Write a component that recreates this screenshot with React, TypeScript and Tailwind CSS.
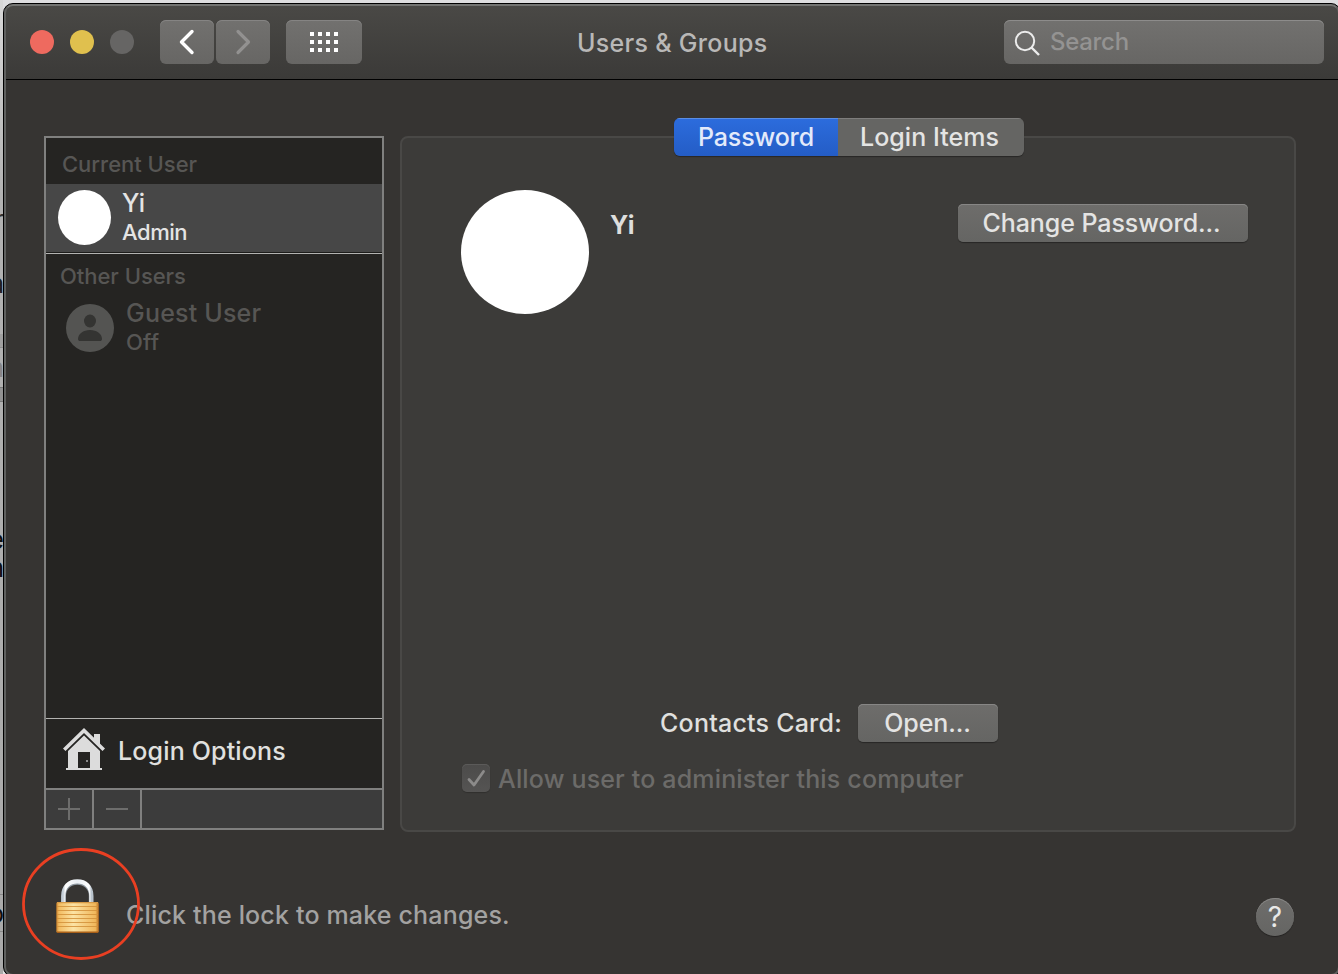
import React from "react";

const backdropText = [
  { ch: "r", cls: "top-[203px] text-[#303030]" },
  { ch: "a", cls: "top-[267px] text-[#202020]" },
  { ch: "n", cls: "top-[351px] text-[#858585]" },
  { ch: "e", cls: "top-[523px] text-[#101010]" },
  { ch: "n", cls: "top-[551px] text-[#101010]" },
  { ch: "o", cls: "top-[897px] text-[#101010]" },
];

function Backdrop() {
  return (
    <div className="relative h-full w-[3px] shrink-0 overflow-hidden bg-gradient-to-b from-[#d8d8d8] via-[#b2b2b2] via-20% to-[#a9a9a9]">
      <div className="absolute top-[334px] h-[14px] w-full border-b border-[#8d8d8d] bg-[#a0a0a0]" />
      <div className="absolute top-[387px] h-[15px] w-full border-y border-[#777] bg-[#929292]" />
      <div className="absolute top-[894px] h-[38px] w-full border-y border-[#888]" />
      {backdropText.map((t, i) => (
        <span key={i} className={"absolute right-[-1px] text-[26px] leading-[34px] " + t.cls}>
          {t.ch}
        </span>
      ))}
    </div>
  );
}

const raised =
  "bg-gradient-to-b from-[#6e6d6b] to-[#656563] shadow-[inset_0_1px_0_#878685,0_1px_1px_rgba(0,0,0,0.35)]";

function TitleBar() {
  return (
    <header className="flex h-[76px] shrink-0 items-start border-b border-black bg-gradient-to-b from-[#4a4946] to-[#3b3a38] pl-[26px] pt-4">
      <div className="mt-[10px] flex gap-4">
        <span className="size-6 rounded-full bg-[#ee6a5f]" />
        <span className="size-6 rounded-full bg-[#e0c04e]" />
        <span className="size-6 rounded-full bg-[#666564]" />
      </div>
      <div className="ml-[26px] flex gap-[2px]">
        <button className="flex h-11 w-[54px] items-center justify-center rounded-md bg-gradient-to-b from-[#72716f] to-[#676664] shadow-[inset_0_1px_0_#858483]">
          <svg width="16" height="26" viewBox="0 0 16 26" fill="none" stroke="#fff" strokeWidth="3.4" strokeLinecap="round" strokeLinejoin="round">
            <path d="M13 2.500 2.500 13 13 23.500" />
          </svg>
        </button>
        <button className="flex h-11 w-[54px] items-center justify-center rounded-md bg-gradient-to-b from-[#72716f] to-[#676664] shadow-[inset_0_1px_0_#858483]">
          <svg width="16" height="26" viewBox="0 0 16 26" fill="none" stroke="#929190" strokeWidth="3.200" strokeLinecap="round" strokeLinejoin="round">
            <path d="M3 2.500 13.500 13 3 23.500" />
          </svg>
        </button>
      </div>
      <button className="ml-4 flex h-11 w-[76px] items-center justify-center rounded-md bg-gradient-to-b from-[#72716f] to-[#676664] shadow-[inset_0_1px_0_#858483]">
        <span className="grid grid-cols-4 gap-1">
          {Array.from({ length: 12 }, (_, i) => (
            <span key={i} className="size-1 bg-white" />
          ))}
        </span>
      </button>
      <h1 className="ml-[215px] mt-[7px] w-[200px] whitespace-nowrap text-[25px] font-[450] leading-8 tracking-[0.3px] text-[#b9b8b7]">
        Users &amp; Groups
      </h1>
      <div className="ml-[227px] flex h-11 w-[320px] shrink-0 items-start rounded-md bg-gradient-to-b from-[#72716f] to-[#676664] pl-[10px] shadow-[inset_0_1px_0_#8d8c8b]">
        <svg className="mt-[10px]" width="27" height="27" viewBox="0 0 27 27" fill="none" stroke="#ececec" strokeWidth="2">
          <circle cx="11" cy="11" r="9.2" />
          <path d="M17.5 17.5 25 25" strokeWidth="2.4" />
        </svg>
        <span className="ml-[9px] mt-[6px] text-[24px] font-[450] leading-8 tracking-[-0.3px] text-[#949392]">Search</span>
      </div>
    </header>
  );
}

function HouseIcon() {
  return (
    <svg width="42" height="43" viewBox="0 0 42 43" fill="#dcdcdc">
      <path d="M31 6h6v13l-6-6z" />
      <path d="M21 0 42 20.500 39.500 23 21 5 2.500 23 0 20.500z" />
      <path d="M21 7.500 37 23v17h2v2H3v-2h2V23z" />
      <path fill="#252422" d="M15 24h12v16H15z" />
      <path fill="#8b8b8b" d="M23 32h2v2h-2z" />
    </svg>
  );
}

function Sidebar() {
  return (
    <aside className="flex h-[694px] w-[340px] shrink-0 flex-col border-2 border-[#80807f] bg-[#252422]">
      <div className="h-[46px] pl-4 pt-3 text-[22px] font-[450] leading-7 tracking-[-0.02px] text-[#575654]">Current User</div>
      <div className="flex h-[68px] items-start bg-[#474747] pl-3 text-[#e4e4e4]">
        <span className="mt-[6px] h-[55px] w-[53px] rounded-[50%] bg-white" />
        <div className="ml-[11px] mt-1">
          <div className="text-[25px] font-[450] leading-[30px]">Yi</div>
          <div className="text-[22px] font-[450] leading-7 tracking-[-0.45px]">Admin</div>
        </div>
      </div>
      <div className="h-[2px] border-b border-[#b3b3b1] bg-[#1c1c1a]" />
      <div className="pl-[14px] pt-2 text-[22px] font-[450] leading-7 tracking-[-0.04px] text-[#575654]">Other Users</div>
      <div className="mt-2 flex items-start pl-5 text-[#575654]">
        <svg className="mt-[6px]" width="48" height="48" viewBox="0 0 48 48">
          <circle cx="24" cy="24" r="24" fill="#545452" />
          <ellipse cx="24" cy="17" rx="6" ry="6.5" fill="#343432" />
          <path d="M12 35c0-5 5-9 12-9s12 4 12 9c0 1.500-1 2-2 2H14c-1 0-2-.5-2-2z" fill="#343432" />
        </svg>
        <div className="ml-3">
          <div className="text-[25px] font-[450] leading-[30px] tracking-[0.2px]">Guest User</div>
          <div className="text-[22px] font-[450] leading-7 tracking-[0.2px]">Off</div>
        </div>
      </div>
      <div className="mt-auto flex h-[70px] items-start border-t border-[#b3b3b1] pl-[17px]">
        <div className="mt-[9px]">
          <HouseIcon />
        </div>
        <span className="ml-[13px] mt-4 whitespace-nowrap text-[25px] font-[450] leading-8 tracking-[0.16px] text-[#e0e0df]">Login Options</span>
      </div>
      <div className="flex h-10 border-t-2 border-[#80807f] bg-[#3c3c3c]">
        <span className="flex w-12 items-center justify-center border-r-2 border-[#80807f]">
          <svg width="22" height="22" viewBox="0 0 22 22" stroke="#6d6d6c" strokeWidth="2">
            <path d="M0 11h22M11 0v22" />
          </svg>
        </span>
        <span className="flex w-12 items-center justify-center border-r-2 border-[#80807f]">
          <svg width="22" height="22" viewBox="0 0 22 22" stroke="#6d6d6c" strokeWidth="2">
            <path d="M0 11h22" />
          </svg>
        </span>
      </div>
    </aside>
  );
}

function PasswordPanel() {
  return (
    <section className="ml-4 h-[696px] w-[896px] shrink-0 rounded-lg border-2 border-[#494846] bg-[#3c3b39]">
      <div className="-mt-5 ml-[272px] flex h-[38px] w-[350px] overflow-hidden rounded-[6px] text-[25px] font-[450] leading-[38px] shadow-[0_1px_1px_rgba(0,0,0,0.35)]">
        <button className="w-[164px] bg-gradient-to-b from-[#2c6cdd] to-[#245dc6] tracking-[-0.15px] text-[#e3eafa] shadow-[inset_0_1px_0_#5a8de4]">Password</button>
        <button className="w-[186px] bg-[#656563] pr-[3px] tracking-[0.05px] text-[#e4e4e3] shadow-[inset_0_1px_0_#7e7d7c]">Login Items</button>
      </div>
      <div className="mt-[34px] flex items-start pl-[59px]">
        <span className="h-[124px] w-[128px] rounded-[50%] bg-white" />
        <span className="ml-[21px] mt-[19px] w-[348px] text-[25px] font-bold leading-8 text-[#dededd]">Yi</span>
        <button className={"mt-[14px] h-[38px] w-[290px] whitespace-nowrap rounded-[5px] pr-[3px] text-[25px] font-[450] leading-[38px] tracking-[-0.06px] text-[#e4e4e3] " + raised}>
          Change Password...
        </button>
      </div>
      <div className="mt-[390px] flex items-center pl-[258px]">
        <span className="w-[198px] whitespace-nowrap text-[25px] font-[450] leading-[38px] tracking-[0.22px] text-[#e0e0df]">Contacts Card:</span>
        <button className={"h-[38px] w-[140px] rounded-[5px] pr-[1px] text-[25px] font-[450] leading-[38px] tracking-[-0.08px] text-[#e4e4e3] " + raised}>Open...</button>
      </div>
      <div className="mt-[22px] flex items-start pl-[60px]">
        <span className="flex size-7 items-center justify-center rounded-[5px] bg-gradient-to-b from-[#4c4b4a] to-[#555453] shadow-[inset_0_1px_0_#5b5a59,0_1px_1px_rgba(0,0,0,0.2)]">
          <svg width="20" height="20" viewBox="0 0 20 20" fill="none" stroke="#8c8b8a" strokeWidth="2.800" strokeLinecap="round" strokeLinejoin="round">
            <path d="M3 11.500 8 17 17.500 3.500" />
          </svg>
        </span>
        <span className="ml-2 whitespace-nowrap text-[25px] font-[450] leading-[30px] tracking-[0.17px] text-[#6c6b69]">Allow user to administer this computer</span>
      </div>
    </section>
  );
}

function LockIcon() {
  return (
    <svg width="118" height="112" viewBox="0 0 118 112">
      <defs>
        <linearGradient id="brass" x1="0" x2="1" y1="0" y2="0">
          <stop offset="0" stopColor="#c9802b" />
          <stop offset=".06" stopColor="#f3bd62" />
          <stop offset=".4" stopColor="#fce3a4" />
          <stop offset=".92" stopColor="#f0b75b" />
          <stop offset="1" stopColor="#b96d20" />
        </linearGradient>
        <linearGradient id="steel" x1="0" x2="1" y1="0" y2="0">
          <stop offset="0" stopColor="#c3cdd6" />
          <stop offset=".08" stopColor="#ffffff" />
          <stop offset=".5" stopColor="#e9eef3" />
          <stop offset=".92" stopColor="#ffffff" />
          <stop offset="1" stopColor="#b9c3cc" />
        </linearGradient>
      </defs>
      <path d="M42.500 54V48C42.500 40 48 35.300 55.300 35.300S68.300 40 68.300 48V54" fill="none" stroke="#8d979f" strokeWidth="3" />
      <path d="M41.200 54V48C41.200 38.800 47 33.400 55.300 33.400S69.400 38.800 69.400 48V54" fill="none" stroke="url(#steel)" strokeWidth="4.200" />
      <rect x="34.300" y="54" width="42.500" height="31" rx="1.800" fill="url(#brass)" />
      <path d="M35 58.500h41M35 62.500h41M35 66.500h41M35 70.500h41M35 74.500h41M35 78.500h41" stroke="#d2903a" strokeOpacity=".85" strokeWidth="1.100" />
      <path d="M35 84.300h41" stroke="#a85f18" strokeWidth="1.400" />
      <path d="M35 54.600h41" stroke="#d89a45" strokeWidth="1.200" />
    </svg>
  );
}

export default function App() {
  return (
    <div className="flex h-[974px] w-[1338px] overflow-hidden bg-[#dedee0] font-['Inter','Liberation_Sans',sans-serif]">
      <Backdrop />
      <main className="relative mt-[3px] flex h-[974px] w-[1338px] shrink-0 flex-col overflow-hidden rounded-[10px] border border-black bg-[#363432]">
        <TitleBar />
        <div className="flex pl-10 pt-14">
          <Sidebar />
          <PasswordPanel />
        </div>
        <footer className="flex items-start pl-[18px]">
          <div className="relative z-10 mt-4">
            <LockIcon />
            <svg className="absolute left-0 top-0" width="118" height="112" viewBox="0 0 118 112" fill="none">
              <ellipse cx="59" cy="56" rx="57.500" ry="54.500" stroke="#e93f22" strokeWidth="2.800" />
            </svg>
          </div>
          <p className="-ml-[14px] mt-[67px] w-[1130px] whitespace-nowrap text-[25px] font-[450] leading-8 tracking-[0.17px] text-[#a3a2a1]">
            Click the lock to make changes.
          </p>
          <button className={"mt-[66px] size-[38px] shrink-0 rounded-full text-[28px] leading-[38px] text-[#e8e8e7] " + raised}>?</button>
        </footer>
        <div className="pointer-events-none absolute inset-0 rounded-[9px] border-2 border-[#5f605f] border-t-[#737472]" />
      </main>
    </div>
  );
}
